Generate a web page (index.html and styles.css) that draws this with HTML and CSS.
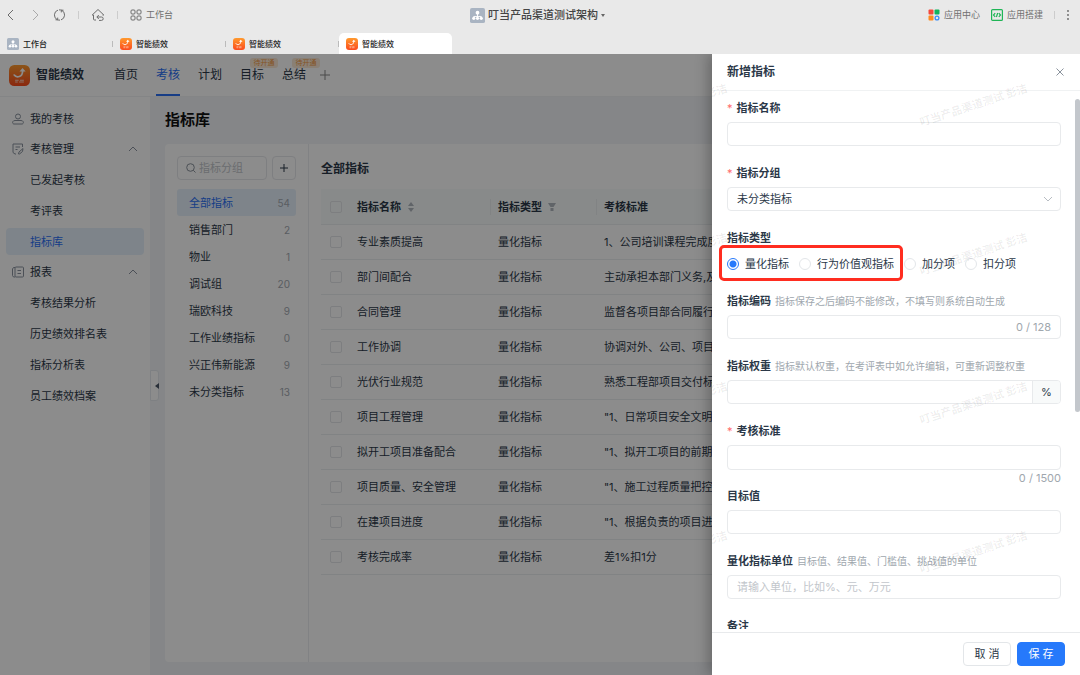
FILE: index.html
```html
<!DOCTYPE html>
<html lang="zh-CN">
<head>
    <meta charset="UTF-8">
    <meta name="viewport" content="width=device-width, initial-scale=1.0">
    <title>智能绩效</title>
    <link rel="stylesheet" href="styles.css">
</head>
<body>
    <!-- shared icons -->
    <svg class="defs" width="0" height="0" aria-hidden="true">
        <defs>
            <linearGradient id="orange" x1="0" y1="0" x2="0" y2="1">
                <stop offset="0" stop-color="#ff9a2e"/>
                <stop offset="1" stop-color="#fb4a1c"/>
            </linearGradient>
        </defs>
        <symbol id="logo" viewBox="0 0 24 24">
            <rect width="24" height="24" rx="6" fill="url(#orange)"/>
            <path d="M6 11.500c2.500 3.500 9.500 2.500 9.500-4.500" fill="none" stroke="#fff" stroke-width="2" stroke-linecap="round"/>
            <path d="M12 7.500L15.500 3.500 19 7.500z" fill="#fff"/>
            <path d="M7 17.500h4M12.500 17.500h4.500M7 19.500h3M11.500 19.500h5.500" stroke="#fff" stroke-width="1.200" opacity=".7"/>
        </symbol>
        <symbol id="org" viewBox="0 0 16 16">
            <rect width="16" height="16" rx="2" fill="#a9b4c2"/>
            <path d="M8 5v6M4 11V9h8v2" fill="none" stroke="#fff" stroke-width="1"/>
            <circle cx="8" cy="5" r="2" fill="#fff"/>
            <circle cx="4" cy="11" r="1.700" fill="#fff"/>
            <circle cx="8" cy="11" r="1.700" fill="#fff"/>
            <circle cx="12" cy="11" r="1.700" fill="#fff"/>
        </symbol>
        <symbol id="up" viewBox="0 0 10 10">
            <path d="M1 7l4-4 4 4" fill="none" stroke="currentColor" stroke-width="1"/>
        </symbol>
    </svg>

    <header class="window">
        <div class="toolbar">
            <div class="tools">
                <button class="icon-btn" aria-label="后退"><svg width="12" height="12" viewBox="0 0 12 12"><path d="M8 1L3 6l5 5"/></svg></button>
                <button class="icon-btn light" aria-label="前进"><svg width="12" height="12" viewBox="0 0 12 12"><path d="M4 1l5 5-5 5"/></svg></button>
                <button class="icon-btn" aria-label="刷新"><svg width="13" height="12" viewBox="0 0 13 12"><path d="M4.500 10.800A5.200 5.200 0 0 1 5 1.100M8.500 1.200A5.200 5.200 0 0 1 8 10.900M6 .9a5 5 0 0 1 2.500.3M7 11.100a5 5 0 0 1-2.500-.3M2.500 10.800h2.200V8.600M10.500 1.200H8.300v2.200"/></svg></button>
                <span class="divider"></span>
                <button class="icon-btn" aria-label="主页"><svg width="14" height="14" viewBox="0 0 14 14"><path d="M5 12H3.500a1 1 0 0 1-1-1V7H1.200L7 1.500 12.800 7H11.500M6 9h4.500a1.700 1.700 0 0 1 0 3.400H8M7.800 7L5.800 9l2 2"/></svg></button>
                <span class="divider"></span>
                <button class="icon-btn"><svg width="12" height="12" viewBox="0 0 12 12"><rect x="1" y="1" width="4" height="4" rx="1"/><rect x="7" y="1" width="4" height="4" rx="1"/><rect x="1" y="7" width="4" height="4" rx="1"/><rect x="7" y="7" width="4" height="4" rx="1"/></svg>工作台</button>
            </div>
            <button class="org-name"><svg width="15" height="15"><use href="#org"/></svg>叮当产品渠道测试架构<i class="caret"></i></button>
            <div class="tools right">
                <button class="icon-btn"><svg width="12" height="12" viewBox="0 0 12 12"><g stroke="none"><rect x="0.500" y="0.500" width="5" height="5" rx="1" fill="#f5483b"/><rect x="6.500" y="0.500" width="5" height="5" rx="1" fill="#12b35f"/><rect x="0.500" y="6.500" width="5" height="5" rx="1" fill="#ff8b1f"/></g><circle cx="9" cy="9" r="1.900" stroke="#3b8cf5" stroke-width="1.300"/></svg>应用中心</button>
                <button class="icon-btn"><svg width="12" height="12" viewBox="0 0 12 12"><g stroke="#1fb556" stroke-width="1.200"><rect x="0.600" y="0.600" width="10.800" height="10.800" rx="1"/><path d="M4.200 4.200L2.500 6l1.700 1.800M7.800 4.200L9.500 6 7.800 7.800M6.700 4L5.400 8"/></g></svg>应用搭建</button>
                <span class="divider"></span>
                <button class="icon-btn" aria-label="更多"><svg width="4" height="12" viewBox="0 0 4 12"><g stroke="none" fill="#666"><circle cx="2" cy="2" r=".9"/><circle cx="2" cy="6" r=".9"/><circle cx="2" cy="10" r=".9"/></g></svg></button>
            </div>
        </div>
        <nav class="tabs">
            <a href="#" class="tab"><svg width="12" height="12"><use href="#org"/></svg>工作台</a>
            <a href="#" class="tab"><svg width="12" height="12"><use href="#logo"/></svg>智能绩效</a>
            <a href="#" class="tab"><svg width="12" height="12"><use href="#logo"/></svg>智能绩效</a>
            <a href="#" class="tab active"><svg width="12" height="12"><use href="#logo"/></svg>智能绩效</a>
        </nav>
    </header>

    <div class="app">
        <header class="app-header">
            <svg width="21" height="21"><use href="#logo"/></svg>
            <h1 class="app-name">智能绩效</h1>
            <nav class="nav">
                <a href="#">首页</a>
                <a href="#" class="active">考核</a>
                <a href="#">计划</a>
                <a href="#">目标<span class="badge">待开通</span></a>
                <a href="#">总结<span class="badge">待开通</span></a>
            </nav>
            <button class="add-nav" aria-label="添加"><svg width="10" height="10" viewBox="0 0 10 10"><path d="M5 0v10M0 5h10" stroke="currentColor"/></svg></button>
        </header>

        <div class="main">
            <aside class="sidebar">
                <a href="#" class="menu-item"><svg width="12" height="12" viewBox="0 0 12 12"><circle cx="6" cy="3.500" r="2.500"/><path d="M3 7.500h6c3 0 3 3.500 1 3.500H2C0 11 0 7.500 3 7.500z"/></svg>我的考核</a>
                <div class="group">
                    <a href="#" class="menu-item"><svg width="12" height="12" viewBox="0 0 12 12"><path d="M4 11H3L1 9.500V1h9.500v3M3.500 4h4.500M3.500 6.500h2M6.500 11l.5-2 4-3.500-.5 3L7.500 11z"/></svg>考核管理<svg class="arrow" width="10" height="10"><use href="#up"/></svg></a>
                    <a href="#" class="menu-item sub">已发起考核</a>
                    <a href="#" class="menu-item sub">考评表</a>
                    <a href="#" class="menu-item sub active">指标库</a>
                </div>
                <div class="group">
                    <a href="#" class="menu-item"><svg width="12" height="12" viewBox="0 0 12 12"><rect x="3" y="1" width="8.500" height="10" rx="1"/><path d="M3 1.500H1.500L.5 3v6.500L1.500 11H3M5.500 4.500h3.500M5.500 7.500h3.500"/></svg>报表<svg class="arrow" width="10" height="10"><use href="#up"/></svg></a>
                    <a href="#" class="menu-item sub">考核结果分析</a>
                    <a href="#" class="menu-item sub">历史绩效排名表</a>
                    <a href="#" class="menu-item sub">指标分析表</a>
                    <a href="#" class="menu-item sub">员工绩效档案</a>
                </div>
                <button class="collapse" aria-label="收起"></button>
            </aside>

            <main class="content">
                <h2 class="page-title">指标库</h2>
                <div class="card">
                    <section class="category">
                        <div class="search-row">
                            <label class="search"><svg width="10" height="10" viewBox="0 0 10 10"><circle cx="4.500" cy="4.500" r="3.800"/><path d="M7.300 7.300L9.500 9.500"/></svg><input type="text" placeholder="指标分组" aria-label="指标分组"></label>
                            <button class="add" aria-label="新增分组"><svg width="8" height="8" viewBox="0 0 8 8"><path d="M4 0v8M0 4h8" stroke="currentColor"/></svg></button>
                        </div>
                        <a href="#" class="cate active">全部指标<span>54</span></a>
                        <a href="#" class="cate">销售部门<span>2</span></a>
                        <a href="#" class="cate">物业<span>1</span></a>
                        <a href="#" class="cate">调试组<span>20</span></a>
                        <a href="#" class="cate">瑞欧科技<span>9</span></a>
                        <a href="#" class="cate">工作业绩指标<span>0</span></a>
                        <a href="#" class="cate">兴正伟新能源<span>9</span></a>
                        <a href="#" class="cate">未分类指标<span>13</span></a>
                    </section>
                    <section class="list">
                        <h3 class="list-title">全部指标</h3>
                        <table class="table">
                            <thead>
                                <tr>
                                    <th class="check"><input type="checkbox" aria-label="全选"></th>
                                    <th class="name">指标名称<svg width="8" height="10" viewBox="0 0 8 10"><path d="M4 0l3 4H1zM4 10l3-4H1z"/></svg></th>
                                    <th class="type">指标类型<svg width="8" height="10" viewBox="0 0 8 10"><path d="M0 1h8L5.500 5h-3zM2.500 6h3v3h-3z"/></svg></th>
                                    <th>考核标准</th>
                                </tr>
                            </thead>
                            <tbody>
                                <tr><td class="check"><input type="checkbox" aria-label="专业素质提高"></td><td>专业素质提高</td><td>量化指标</td><td>1、公司培训课程完成度</td></tr>
                                <tr><td class="check"><input type="checkbox" aria-label="部门间配合"></td><td>部门间配合</td><td>量化指标</td><td>主动承担本部门义务,及时</td></tr>
                                <tr><td class="check"><input type="checkbox" aria-label="合同管理"></td><td>合同管理</td><td>量化指标</td><td>监督各项目部合同履行情况</td></tr>
                                <tr><td class="check"><input type="checkbox" aria-label="工作协调"></td><td>工作协调</td><td>量化指标</td><td>协调对外、公司、项目部</td></tr>
                                <tr><td class="check"><input type="checkbox" aria-label="光伏行业规范"></td><td>光伏行业规范</td><td>量化指标</td><td>熟悉工程部项目交付标准</td></tr>
                                <tr><td class="check"><input type="checkbox" aria-label="项目工程管理"></td><td>项目工程管理</td><td>量化指标</td><td>"1、日常项目安全文明、</td></tr>
                                <tr><td class="check"><input type="checkbox" aria-label="拟开工项目准备配合"></td><td>拟开工项目准备配合</td><td>量化指标</td><td>"1、拟开工项目的前期合</td></tr>
                                <tr><td class="check"><input type="checkbox" aria-label="项目质量、安全管理"></td><td>项目质量、安全管理</td><td>量化指标</td><td>"1、施工过程质量把控、</td></tr>
                                <tr><td class="check"><input type="checkbox" aria-label="在建项目进度"></td><td>在建项目进度</td><td>量化指标</td><td>"1、根据负责的项目进度</td></tr>
                                <tr><td class="check"><input type="checkbox" aria-label="考核完成率"></td><td>考核完成率</td><td>量化指标</td><td>差1%扣1分</td></tr>
                            </tbody>
                        </table>
                    </section>
                </div>
            </main>
        </div>

        <div class="mask"></div>

        <form class="drawer">
            <div class="drawer-header">
                <h2>新增指标</h2>
                <button type="button" class="close" aria-label="关闭"><svg width="8" height="8" viewBox="0 0 8 8"><path d="M0.500 0.500l7 7M7.500 0.500l-7 7" stroke="currentColor"/></svg></button>
            </div>
            <div class="drawer-body">
                <div class="field">
                    <label class="required" for="name">指标名称</label>
                    <input type="text" id="name" class="control">
                </div>
                <div class="field">
                    <label class="required" for="group">指标分组</label>
                    <div class="select">
                        <select id="group" class="control"><option>未分类指标</option></select>
                        <svg width="10" height="10" viewBox="0 0 10 10"><path d="M1 3l4 4 4-4" fill="none" stroke="currentColor"/></svg>
                    </div>
                </div>
                <fieldset class="field">
                    <legend>指标类型</legend>
                    <div class="radios">
                        <label><input type="radio" name="type" checked>量化指标</label>
                        <label><input type="radio" name="type">行为价值观指标</label>
                        <label><input type="radio" name="type">加分项</label>
                        <label><input type="radio" name="type">扣分项</label>
                        <span class="highlight"></span>
                    </div>
                </fieldset>
                <div class="field">
                    <label for="code">指标编码<span class="hint">指标保存之后编码不能修改，不填写则系统自动生成</span></label>
                    <div class="control with-count"><input type="text" id="code"><span>0 / 128</span></div>
                </div>
                <div class="field">
                    <label for="weight">指标权重<span class="hint">指标默认权重，在考评表中如允许编辑，可重新调整权重</span></label>
                    <div class="control with-addon"><input type="text" id="weight"><span>%</span></div>
                </div>
                <div class="field area">
                    <label class="required" for="standard">考核标准</label>
                    <textarea id="standard" class="control"></textarea>
                    <span class="count">0 / 1500</span>
                </div>
                <div class="field">
                    <label for="target">目标值</label>
                    <input type="text" id="target" class="control">
                </div>
                <div class="field">
                    <label for="unit">量化指标单位<span class="hint">目标值、结果值、门槛值、挑战值的单位</span></label>
                    <input type="text" id="unit" class="control" placeholder="请输入单位，比如%、元、万元">
                </div>
                <div class="field">
                    <label for="remark">备注</label>
                    <textarea id="remark" class="control"></textarea>
                </div>
            </div>
            <div class="drawer-footer">
                <button type="button" class="btn">取 消</button>
                <button type="submit" class="btn primary">保 存</button>
            </div>
            <div class="scrollbar"></div>
            <div class="watermark" aria-hidden="true">
                <span>叮当产品渠道测试 彭洁</span><span>叮当产品渠道测试 彭洁</span>
                <span>叮当产品渠道测试 彭洁</span><span>叮当产品渠道测试 彭洁</span>
                <span>叮当产品渠道测试 彭洁</span><span>叮当产品渠道测试 彭洁</span>
                <span>叮当产品渠道测试 彭洁</span><span>叮当产品渠道测试 彭洁</span>
            </div>
        </form>
    </div>
</body>
</html>
```

FILE: styles.css
```css
* {
    margin: 0;
    padding: 0;
    box-sizing: border-box;
}
body {
    height: 100vh;
    display: flex;
    flex-direction: column;
    overflow: hidden;
    font-family: Inter, "Noto Sans CJK SC", sans-serif;
    font-size: 11px;
    line-height: 20px;
    color: #2b3848;
}
button, input, select, textarea {
    font: inherit;
    color: inherit;
    border: none;
    background: none;
    outline: none;
}
button {
    cursor: pointer;
}
a {
    color: inherit;
    text-decoration: none;
}
svg {
    flex: none;
}
.defs {
    position: absolute;
}

/* window bar */
.window {
    background-color: #e9e9e9;
}
.toolbar {
    display: grid;
    grid-template-columns: 1fr auto 1fr;
    align-items: center;
    height: 33px;
    padding: 0 10px 3px 5px;
}
.tools {
    display: flex;
    align-items: center;
    gap: 12px;
}
.tools.right {
    justify-content: flex-end;
    gap: 11px;
}
.icon-btn {
    display: flex;
    align-items: center;
    gap: 4px;
    font-size: 9px;
    color: #707070;
}
.icon-btn svg {
    fill: none;
    stroke: #6c6c6c;
}
.icon-btn.light svg {
    stroke: #aaa;
}
.divider {
    width: 1px;
    height: 8px;
    background-color: #ccc;
}
.org-name {
    display: flex;
    align-items: center;
    gap: 3px;
    font-weight: 500;
    color: #444;
}
.caret {
    border: 2px solid transparent;
    border-top: 3px solid #666;
    border-bottom: none;
}
.tabs {
    display: flex;
    height: 21px;
}
.tab {
    display: flex;
    align-items: center;
    gap: 4px;
    width: 113px;
    padding-left: 7px;
    font-size: 8px;
    font-weight: 500;
    color: #222;
}
.tab.active {
    background-color: #fff;
    border-radius: 5px 5px 0 0;
}
.tab:not(.active)::after {
    content: "";
    width: 1px;
    height: 6px;
    margin-left: auto;
    background-color: #bbb;
}

/* app */
.app {
    position: relative;
    flex: 1;
    display: flex;
    flex-direction: column;
    min-height: 0;
    overflow: hidden;
}
.app-header {
    display: flex;
    align-items: center;
    height: 43px;
    padding-left: 9px;
    background-color: #fff;
    border-bottom: 1px solid #f0f2f4;
}
.app-name {
    margin-left: 6px;
    font-size: 12px;
}
.nav {
    display: flex;
    gap: 18px;
    align-self: stretch;
    margin-left: 30px;
    font-size: 12px;
    line-height: 42px;
}
.nav a {
    position: relative;
}
.nav .active {
    color: #2a70f5;
    border-bottom: 2px solid #2a70f5;
}
.badge {
    position: absolute;
    top: 4px;
    left: 10px;
    width: 28px;
    border-radius: 3px;
    background-color: #fbe9d6;
    color: #f39a45;
    font-size: 7px;
    line-height: 10px;
    text-align: center;
}
.add-nav {
    margin-left: 14px;
    line-height: 1px;
    color: #888;
}
.main {
    flex: 1;
    display: flex;
    min-height: 0;
}
.sidebar {
    position: relative;
    display: flex;
    flex-direction: column;
    gap: 3px;
    width: 150px;
    padding: 8px 6px;
    background-color: #fff;
}
.group {
    display: flex;
    flex-direction: column;
    gap: 4px;
}
.menu-item {
    display: flex;
    align-items: center;
    gap: 6px;
    height: 27px;
    padding: 0 6px;
    border-radius: 4px;
}
.menu-item svg {
    fill: none;
    stroke: #8a939e;
    color: #8a939e;
}
.menu-item .arrow {
    margin-left: auto;
}
.menu-item.sub {
    padding-left: 24px;
}
.menu-item.active, .cate.active {
    background-color: #e6f1fb;
    color: #2a70f5;
}
.collapse {
    position: absolute;
    left: 150px;
    top: 273px;
    width: 9px;
    height: 31px;
    background-color: #fff;
    border: 1px solid #e6eaee;
    border-radius: 0 3px 3px 0;
}
.collapse::after {
    content: "";
    display: block;
    width: 4px;
    margin: auto;
    border: 3px solid transparent;
    border-left: none;
    border-right: 4px solid #4a5666;
}
.content {
    flex: 1;
    display: flex;
    flex-direction: column;
    min-width: 0;
    padding: 13px 15px;
    background-color: #f2f5f8;
}
.page-title {
    font-size: 15px;
    color: #111;
}
.card {
    flex: 1;
    display: flex;
    margin-top: 14px;
    background-color: #fff;
    border-radius: 4px;
}
.category {
    width: 144px;
    padding: 12px;
    border-right: 1px solid #ebedf0;
}
.search-row {
    display: flex;
    gap: 5px;
    margin-bottom: 9px;
}
.search {
    flex: 1;
    display: flex;
    align-items: center;
    gap: 3px;
    height: 24px;
    padding-left: 8px;
    border: 1px solid #e6e8eb;
    border-radius: 4px;
}
.search svg {
    fill: none;
    stroke: #8a929c;
}
.search input {
    width: 60px;
}
::placeholder {
    color: #c2c6cb;
}
.add {
    width: 24px;
    border: 1px solid #e6e8eb;
    border-radius: 4px;
    line-height: 8px;
}
.cate {
    display: flex;
    justify-content: space-between;
    align-items: center;
    height: 27px;
    padding: 0 6px 0 12px;
    border-radius: 3px;
}
.cate span {
    font-size: 10px;
    color: #a4aab2;
}
.list {
    flex: 1;
    padding: 15px 12px;
}
.list-title {
    margin-bottom: 10px;
    font-size: 12px;
}
.table {
    width: 100%;
    table-layout: fixed;
    border-collapse: separate;
    border-spacing: 0;
    text-align: left;
    white-space: nowrap;
}
.table th, .table td {
    height: 35px;
    padding-left: 7px;
    border-bottom: 1px solid #eceef0;
}
.table th {
    height: 36px;
    background-color: #f8fbfb;
}
.table .check {
    width: 29px;
    padding-left: 9px;
}
.table .name {
    width: 141px;
}
.table .type {
    width: 106px;
}
.table .name, .table .type {
    background-image: linear-gradient(#eceef0, #eceef0);
    background-size: 1px 16px;
    background-position: right center;
    background-repeat: no-repeat;
}
.table th svg {
    margin-left: 6px;
    vertical-align: -1px;
    fill: #b0b6bd;
}
input[type="checkbox"] {
    appearance: none;
    display: block;
    width: 12px;
    height: 12px;
    border: 1px solid #e3e6e9;
    border-radius: 2px;
}
.mask {
    position: absolute;
    inset: 0;
    background-color: rgba(0, 0, 0, 0.45);
}

/* drawer */
.drawer {
    position: absolute;
    top: 0;
    right: 0;
    bottom: 0;
    width: 368px;
    display: flex;
    flex-direction: column;
    overflow: hidden;
    background-color: #fff;
}
.mask::after {
    content: "";
    position: absolute;
    top: 0;
    right: 0;
    bottom: 0;
    width: 368px;
    box-shadow: -4px 0 12px rgba(0, 0, 0, 0.25);
}
.drawer-header {
    display: flex;
    justify-content: space-between;
    align-items: center;
    height: 37px;
    padding: 0 16px 0 15px;
    border-bottom: 1px solid #f0f2f3;
}
.drawer-header h2 {
    font-size: 12px;
}
.close {
    line-height: 1px;
    color: #8a929c;
}
.drawer-body {
    flex: 1;
    min-height: 0;
    margin-bottom: 3px;
    padding: 7px 19px 0 15px;
    overflow: hidden;
}
.field {
    margin-bottom: 17px;
    border: none;
}
fieldset.field {
    margin-bottom: 16px;
}
.field > label, .field legend {
    display: block;
    margin-bottom: 4px;
    font-weight: 700;
    white-space: nowrap;
}
.required::before {
    content: "*";
    margin-right: 4px;
    color: #ff6b6d;
    font-weight: 400;
}
.hint {
    margin-left: 4px;
    font-size: 10px;
    font-weight: 400;
    color: #a0a7ae;
}
.control {
    display: block;
    width: 100%;
    height: 24px;
    padding: 0 9px;
    border: 1px solid #e8eaec;
    border-radius: 4px;
    resize: none;
}
.select {
    position: relative;
}
.select select {
    appearance: none;
}
.select svg {
    position: absolute;
    right: 8px;
    top: 7px;
    color: #b8bdc3;
}
.radios {
    position: relative;
    display: flex;
    align-items: center;
    gap: 10px;
    height: 23px;
}
.radios label {
    display: flex;
    align-items: center;
    gap: 6px;
}
.radios input {
    appearance: none;
    width: 12px;
    height: 12px;
    border: 1px solid #e3e6e9;
    border-radius: 50%;
}
.radios input:checked {
    border-color: #2679fb;
    background: radial-gradient(circle, #2679fb 3px, #fff 4px);
}
.highlight {
    position: absolute;
    left: -8px;
    top: -7px;
    width: 184px;
    height: 36px;
    border: 3px solid #ff2d20;
    border-radius: 5px;
}
.with-count, .with-addon {
    display: flex;
    align-items: center;
}
.with-count input, .with-addon input {
    flex: 1;
    min-width: 0;
}
.with-count span, .count {
    color: #a0a7ae;
}
.with-addon {
    padding-right: 0;
}
.with-addon span {
    width: 28px;
    line-height: 22px;
    text-align: center;
    background-color: #f8fafa;
    border-left: 1px solid #e8eaec;
    border-radius: 0 3px 3px 0;
}
.area {
    margin-bottom: 0;
}
.area .control {
    height: 25px;
}
.count {
    display: block;
    height: 16px;
    line-height: 16px;
    text-align: right;
}
.drawer-footer {
    display: flex;
    justify-content: flex-end;
    align-items: center;
    gap: 6px;
    height: 43px;
    padding-right: 15px;
    border-top: 1px solid #e8eaec;
}
.btn {
    width: 48px;
    height: 24px;
    border: 1px solid #e3e6e9;
    border-radius: 4px;
}
.btn.primary {
    background-color: #2679fb;
    border-color: #2679fb;
    color: #fff;
}
.scrollbar {
    position: absolute;
    right: 0;
    top: 45px;
    width: 5px;
    height: 313px;
    border-radius: 3px;
    background-color: #c3c7cc;
}
.watermark {
    position: absolute;
    top: 40px;
    right: 43px;
    width: 420px;
    display: grid;
    grid-template-columns: 120px 120px;
    justify-content: space-between;
    row-gap: 129px;
    color: rgba(0, 0, 0, 0.07);
    font-weight: 700;
    white-space: nowrap;
    pointer-events: none;
}
.watermark span {
    transform: rotate(-18deg);
}
```
